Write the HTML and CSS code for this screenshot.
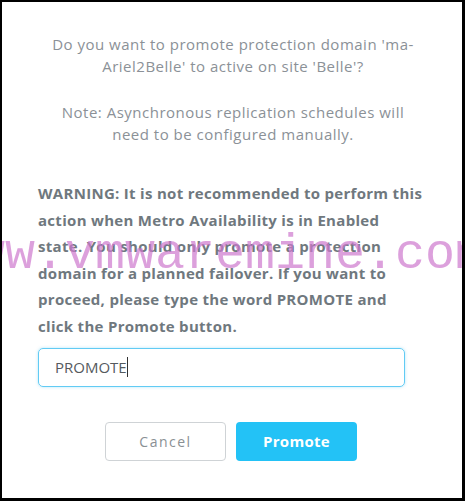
FILE: index.html
```html
<!DOCTYPE html>
<html lang="en">
<head>
    <meta charset="UTF-8">
    <meta name="viewport" content="width=device-width, initial-scale=1.0">
    <title>Promote Protection Domain</title>
    <link rel="stylesheet" href="styles.css">
</head>
<body>
    <div class="dialog">
        <p class="question">Do you want to promote protection domain 'ma-Ariel2Belle' to active on site 'Belle'?</p>
        <p class="question">Note: Asynchronous replication schedules will need to be configured manually.</p>
        <p class="warning">WARNING: It is not recommended to perform this action when Metro Availability is in Enabled state. You should only promote a protection domain for a planned failover. If you want to proceed, please type the word PROMOTE and click the Promote button.</p>
        <div class="confirm-input"><span class="typed">PROMOTE</span></div>
        <div class="actions">
            <button class="btn btn-cancel">Cancel</button>
            <button class="btn btn-primary">Promote</button>
        </div>
    </div>
    <div class="watermark">www.vmwaremine.com</div>
</body>
</html>
```

FILE: styles.css
```css
html, body {
    margin: 0;
    padding: 0;
}
body {
    position: relative;
    width: 465px;
    height: 501px;
    box-sizing: border-box;
    border-style: solid;
    border-color: #000;
    border-width: 2px 3px 3px 2px;
    background: #fff;
    overflow: hidden;
    font-family: "Open Sans", Lato, sans-serif;
}
.dialog {
    padding: 31px 34px 0 36px;
}
.question {
    margin: 0 auto 24px;
    width: 380px;
    text-align: center;
    font-size: 15px;
    letter-spacing: 0.5px;
    line-height: 22px;
    color: #8b9197;
}
.warning {
    margin: 35px 0 8px;
    width: 386px;
    font-size: 15px;
    letter-spacing: 0.3px;
    font-weight: bold;
    line-height: 26.6px;
    color: #6f787e;
}
.confirm-input {
    width: 367px;
    height: 39px;
    box-sizing: border-box;
    border: 1.5px solid #62cbf4;
    border-radius: 5px;
    box-shadow: 0 0 3px rgba(98, 203, 244, 0.5);
    padding: 0 16px;
    display: flex;
    align-items: center;
    font-size: 15px;
    color: #555a5e;
}
.typed {
    border-right: 1.5px solid #333;
    line-height: 20px;
}
.actions {
    display: flex;
    justify-content: center;
    gap: 10px;
    margin-top: 35px;
    padding-right: 4px;
}
.btn {
    width: 121px;
    height: 39px;
    border-radius: 4px;
    font-family: "Open Sans", Lato, sans-serif;
    font-size: 14px;
    cursor: pointer;
}
.btn-cancel {
    background: #fff;
    border: 1px solid #cfd3d6;
    color: #8a9094;
    letter-spacing: 1.5px;
}
.btn-primary {
    background: #23c2f6;
    border: none;
    color: #fff;
    font-weight: bold;
    font-size: 15px;
    letter-spacing: 0.3px;
}
.watermark {
    position: absolute;
    left: -57px;
    top: 225px;
    font-family: "Liberation Mono", monospace;
    font-size: 50px;
    line-height: 56px;
    white-space: nowrap;
    color: rgba(205, 120, 205, 0.7);
}
```
